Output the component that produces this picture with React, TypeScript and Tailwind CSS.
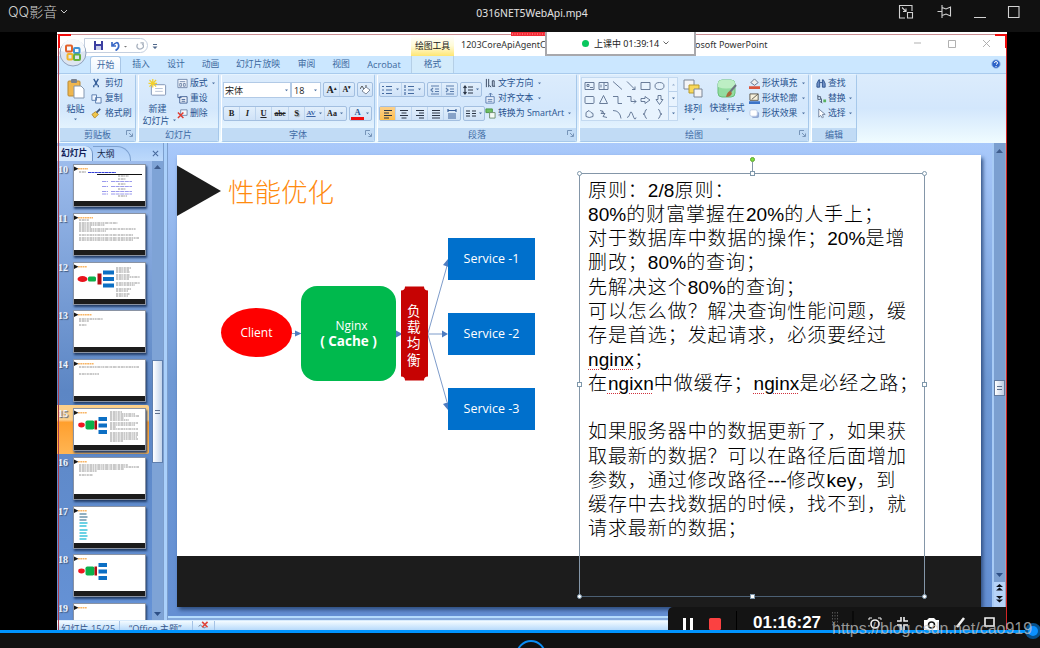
import { Fragment, type ReactNode } from "react";
import clsx from "clsx";

const UI = "font-['Open_Sans','Noto_Sans_CJK_SC',sans-serif]";

const TABS = [
  { label: "插入", w: "w-[36px]" },
  { label: "设计", w: "w-[34px]" },
  { label: "动画", w: "w-[35px]" },
  { label: "幻灯片放映", w: "w-[60px]" },
  { label: "审阅", w: "w-[37px]" },
  { label: "视图", w: "w-[32px]" },
  { label: "Acrobat", w: "w-[54px]" },
];

const NOTES = [
  "原则：2/8原则：",
  "80%的财富掌握在20%的人手上；",
  "对于数据库中数据的操作；20%是增",
  "删改；80%的查询；",
  "先解决这个80%的查询；",
  "可以怎么做？解决查询性能问题，缓",
  "存是首选；发起请求，必须要经过",
  "nginx；",
  "在ngixn中做缓存；nginx是必经之路；",
  "",
  "如果服务器中的数据更新了，如果获",
  "取最新的数据？可以在路径后面增加",
  "参数，通过修改路径---修改key，到",
  "缓存中去找数据的时候，找不到，就",
  "请求最新的数据；",
];

type ThumbKind = "table" | "text" | "diagram" | "short" | "two" | "current" | "para" | "links" | "small" | "blank";

const SLIDES: { no: number; kind: ThumbKind }[] = [
  { no: 10, kind: "table" },
  { no: 11, kind: "text" },
  { no: 12, kind: "diagram" },
  { no: 13, kind: "short" },
  { no: 14, kind: "two" },
  { no: 15, kind: "current" },
  { no: 16, kind: "para" },
  { no: 17, kind: "links" },
  { no: 18, kind: "small" },
  { no: 19, kind: "blank" },
];

const TITLE_WIDTH: Record<ThumbKind, number> = {
  table: 10,
  text: 15,
  diagram: 9,
  short: 14,
  two: 16,
  current: 9,
  para: 9,
  links: 9,
  small: 9,
  blank: 9,
};

// x, y, width of each scribbled text line
const LINES: Partial<Record<ThumbKind, number[][]>> = {
  table: [[6, 8, 7], [45, 12, 11], [45, 15, 8], [45, 20, 8], [45, 25, 8], [45, 32, 9]],
  text: [[6, 7, 10], [6, 10, 39], [6, 12, 26], [6, 14, 12], [6, 16, 57], [6, 18, 27], [6, 22, 54], [6, 25, 60], [6, 27, 54]],
  diagram: [[43, 6, 15], [43, 8, 13], [43, 10, 14], [43, 13, 14], [43, 15, 24], [43, 17, 13], [43, 21, 24], [43, 23, 19], [43, 27, 15], [43, 29, 12], [43, 32, 14], [43, 34, 12]],
  short: [[6, 9, 24], [6, 11, 10], [6, 15, 8]],
  two: [[6, 8, 60], [6, 15, 20]],
  current: [[37, 4, 12], [37, 6, 25], [37, 8, 29], [37, 10, 14], [37, 12, 19], [37, 15, 28], [37, 17, 25], [37, 19, 6], [37, 21, 28], [37, 25, 28], [37, 27, 28], [37, 29, 27], [37, 31, 28], [37, 33, 13]],
  para: [[6, 8, 49], [6, 10, 60], [6, 12, 45], [6, 14, 18], [6, 18, 14]],
};

function Caret({ className }: { className?: string }) {
  return (
    <svg className={clsx("h-[3px] w-[5px] shrink-0", className)} viewBox="0 0 5 3">
      <path d="M1 .5h3L2.5 2.3z" fill="#4a6f9f" />
    </svg>
  );
}

function Thumb({ kind }: { kind: ThumbKind }) {
  const wide = kind === "diagram";
  const compact = kind === "current" || kind === "small";
  return (
    <svg viewBox="0 0 73 43" className="h-[43px] w-[73px] shrink-0 shadow-[1px_2px_2px_#24406b]">
      <rect x=".5" y=".5" width="72" height="42" fill="#fff" stroke="#8a93a3" />
      <rect x="1" y="37" width="71" height="5" fill="#1c1c1c" />
      <path d="M1 2.5l4.5 2.3L1 7z" fill="#1a1a1a" />
      <path d={`M5 4.8h${TITLE_WIDTH[kind]}`} stroke="#f8b565" strokeWidth="1.6" strokeDasharray="1.8 .5" />
      {(LINES[kind] ?? []).map(([x, y, w], i) => (
        <path key={i} d={`M${x} ${y}h${w}`} stroke="#888" strokeWidth=".9" strokeDasharray="2 .7 3 .5 1 .6" />
      ))}
      {kind === "table" && (
        <g>
          <path d="M15 8.5h28" stroke="#3540d8" strokeDasharray="3 .4" />
          <path d="M24 10.5h45" stroke="#111" strokeWidth="1.2" />
          {[17.5, 22.5, 27.5, 30].map((y) => (
            <path key={y} d={`M29 ${y}h6m3 0h21`} stroke="#9a9aec" strokeDasharray="4 .6" />
          ))}
        </g>
      )}
      {kind === "links" &&
        [8, 11, 14, 17, 20, 24, 27, 30, 33].map((y, i) => (
          <path key={y} d={`M6.5 ${y}h${i % 2 ? 8 : 7}`} stroke={i < 3 ? "#6d94ad" : "#3ac3dc"} strokeWidth="1.5" />
        ))}
      {wide && (
        <g>
          <ellipse cx="9.5" cy="17" rx="5" ry="3" fill="#e8131c" />
          <rect x="15" y="14.5" width="8" height="5" rx="1.5" fill="#0bb14b" />
          <rect x="24.5" y="11.5" width="4" height="11" fill="#b30d14" />
          <path d="M30 8.500h11v4H30zM30 15h11v4H30zM30 21.500h11v4H30z" fill="#0c6fc4" />
        </g>
      )}
      {compact && (
        <g>
          <ellipse cx="8.5" cy="17" rx="3.3" ry="2.4" fill="#f01820" />
          <rect x="12.5" y="12.5" width="9" height="9" rx="1.8" fill="#0bb14b" />
          <rect x="21.5" y="12.5" width="2.5" height="9" fill="#b30d14" />
          <path d="M25.500 9h8.500v4h-8.500zM25.500 15.500h8.500v4h-8.500zM25.500 22h8.500v4h-8.500z" fill="#0c6fc4" />
        </g>
      )}
    </svg>
  );
}

function Group({ label, width, launcher, children }: { label: string; width: string; launcher?: boolean; children: ReactNode }) {
  return (
    <div
      className={clsx(
        "flex h-[68px] shrink-0 flex-col overflow-hidden rounded-[2px] border border-[#a6c8ea] border-l-white border-t-[#e6f4ff]",
        width,
      )}
    >
      <div className="flex h-[53px] pt-[1px]">{children}</div>
      <div className="relative flex h-[13px] items-center justify-center bg-[#c1dbf5] text-[9px] leading-none text-[#3f6ba5]">
        {label}
        {launcher && (
          <svg viewBox="0 0 7 7" className="absolute right-[2px] top-[2px] h-[7px] w-[7px]" fill="none" stroke="#7795b9">
            <path d="M.5 5V.5H5M3 3l3 3M6.500 3.500v3h-3" />
          </svg>
        )}
      </div>
    </div>
  );
}

function Item({ icon, label, caret, gap = "gap-[3px]" }: { icon: ReactNode; label: string; caret?: boolean; gap?: string }) {
  return (
    <div className={clsx("flex h-[15px] items-center whitespace-nowrap text-[8.900px] leading-none", gap)}>
      <svg viewBox="0 0 12 12" className="h-[11px] w-[11px] shrink-0" fill="none">
        {icon}
      </svg>
      <span>{label}</span>
      {caret && <Caret className="ml-[1px]" />}
    </div>
  );
}

function Tool({ children, width = "w-[16px]", active }: { children: ReactNode; width?: string; active?: boolean }) {
  return (
    <div
      className={clsx(
        "flex h-full items-center justify-center border-r border-[#bdd4ee] last:border-r-0",
        width,
        active && "bg-gradient-to-b from-[#fbd08a] to-[#ffbe4a]",
      )}
    >
      {children}
    </div>
  );
}

function ToolBox({ children }: { children: ReactNode }) {
  return (
    <div className="flex h-[15px] shrink-0 rounded-[2px] border border-[#a3bfe0] bg-gradient-to-b from-[#e2effc] to-[#cfe2f7]">
      {children}
    </div>
  );
}

function Bars({ d, color = "#2a3444" }: { d: string; color?: string }) {
  return (
    <svg viewBox="0 0 10 10" className="h-[10px] w-[10px]" fill="none" stroke={color} strokeWidth="1.2">
      <path d={d} />
    </svg>
  );
}

const SHAPES = [
  "M1 2h9v7H1zM3 4h2v2H3zM6 7h3",
  "M1 2h9v7H1zM6 2v7M3 4v3M7 5h2",
  "M1 1l9 8",
  "M1 1l8 8M9 6v3H6",
  "M1 2h9v7H1z",
  "M1 5.5a4.500 3.500 0 1 0 9 0a4.500 3.500 0 1 0-9 0",
  "M2 2h7q1 0 1 1v5q0 1-1 1H2q-1 0-1-1V3q0-1 1-1",
  "M5.500 1l4 8h-8z",
  "M1 2h5v7h4",
  "M1 2h4v5h5M8 5l2 2-2 2",
  "M1 4h4V2l5 3.500L5 9V7H1z",
  "M4 1h3v4h2L5.500 10 2 5h2z",
  "M2 8V4l3-2 2 2 2 1v3q-4 2-7 0z",
  "M2 2l3 1-2 2 4 0-2 3 4 1M4 2l2 3",
  "M1 2q7 0 8 8",
  "M1 9q2 0 3-4t3 2 3 2",
  "M7 1Q5 1 5 3.500T3 5.500Q5 5.500 5 7.500T7 10",
  "M4 1q2 0 2 2.500T8 5.500Q6 5.500 6 7.500T4 10",
];

function PlayerBar() {
  return (
    <div className="flex h-8 shrink-0 bg-[#111] text-[#d0d0d0]">
      <div className="flex w-[300px] items-start gap-[3px] pl-2 pt-[4px] font-['Inter','Noto_Sans_CJK_SC',sans-serif] text-[14px] font-light leading-[16px]">
        <span>QQ影音</span>
        <svg viewBox="0 0 8 6" className="mt-[5px] h-[6px] w-[8px]" fill="none" stroke="#c8c8c8">
          <path d="M1 1l3 3 3-3" />
        </svg>
      </div>
      <div className="flex-1 pt-[5px] text-center font-['Noto_Sans',sans-serif] text-[10.400px] leading-[16px] text-[#e3e3e3]">
        0316NET5WebApi.mp4
      </div>
      <svg viewBox="0 0 276 32" className="h-8 w-[276px]" fill="none" stroke="#d2d2d2" strokeWidth="1.1">
        <path d="M141 18h-5.500V5.500H148V11M143.500 12.500h5v5.500h-5zM138 7.500l4 4M142 8.500v3h-3" />
        <path d="M173.500 11.500h4M178 5v13M178 7.500l4 1.500 4.500-2v9l-4.500-2-4 1.500" />
        <path d="M210 17.500h12M244.500 6.500H255v11h-10.500z" />
      </svg>
    </div>
  );
}

function TitleRow() {
  return (
    <div className="flex h-[22px] shrink-0 border-t border-[#c98d92] bg-white text-[9px] leading-none text-[#333]">
      <div className="ml-[27px] mt-[3px] flex h-[15px] w-[64px] items-center gap-[8px] rounded-r-full border border-[#c4cfdf] pl-[9px]">
        <svg viewBox="0 0 9 9" className="h-[9px] w-[9px]">
          <path d="M0 0h9v9H0z" fill="#3b3ea0" />
          <path d="M2 0h5v3H2z" fill="#fff" />
          <path d="M2 5h5v4H2z" fill="#c9cdea" />
        </svg>
        <svg viewBox="0 0 17 10" className="h-[10px] w-[17px]" fill="none">
          <path d="M1 1v4h4M1.500 4.500q5-5 6-1t-3 6" stroke="#3968c6" strokeWidth="1.7" />
          <path d="M13 5h3l-1.500 1.500z" fill="#777" />
        </svg>
        <svg viewBox="0 0 9 9" className="h-[8px] w-[8px]" fill="none" stroke="#a9b2bf" strokeWidth="1.5">
          <path d="M2 2q-2 3 0 5t5 0 0-5M5 1h3v3" />
        </svg>
      </div>
      <svg viewBox="0 0 6 6" className="ml-[4px] mt-[9px] h-[6px] w-[6px]">
        <path d="M1 0h4v1H1zM.5 2.500h5L3 5z" fill="#51698c" />
      </svg>
      <div className="ml-[253px] flex w-[43px] items-center justify-center bg-gradient-to-b from-white via-[#fffbd8] to-[#ffe670] pt-[2px] text-[8.800px] text-[#222]">
        绘图工具
      </div>
      <span className="ml-[7px] mt-[5px] w-[87px] whitespace-nowrap font-['Noto_Sans',sans-serif] text-[9px]">
        1203CoreApiAgentC
      </span>
      <span className="ml-[147px] mt-[5px] whitespace-nowrap font-['Noto_Sans',sans-serif] text-[9px]">osoft PowerPoint</span>
      <svg viewBox="0 0 80 12" className="ml-auto mr-[13px] mt-[3px] h-[12px] w-[80px]" fill="none" stroke="#a8a8a8" strokeWidth=".9">
        <path d="M0 5h7M34.500 2.500h7v7h-7zM69 2l7 7M76 2l-7 7" />
      </svg>
    </div>
  );
}

function RibbonTabs() {
  return (
    <div className="flex h-[17px] shrink-0 items-stretch bg-[#cbe7ff] text-[8.800px] leading-none text-[#3b679e]">
      <div className="ml-[33px] flex w-[31px] items-center justify-center rounded-t-[3px] border border-b-0 border-[#a8c6e6] bg-gradient-to-b from-white to-[#e8f4ff]">
        开始
      </div>
      <div className="ml-[2px] flex items-center">
        {TABS.map((t, i) => (
          <span key={t.label} className={clsx("text-center", t.w, i === 6 && "text-[9.200px]")}>
            {t.label}
          </span>
        ))}
      </div>
      <div className="flex w-[43px] items-center justify-center border-x border-[#b5cfe6] bg-[#d3ebfb]">格式</div>
      <svg viewBox="0 0 10 10" className="ml-auto mr-[6px] mt-[3px] h-[10px] w-[10px]">
        <circle cx="5" cy="5" r="4.3" fill="#2c63c8" stroke="#a9c7ee" />
        <path d="M3.500 4q0-1.500 1.500-1.500T6.500 4Q6.500 5 5 5.500M5 7v1" stroke="#fff" fill="none" />
      </svg>
    </div>
  );
}

function Ribbon() {
  return (
    <div className="flex h-[70px] shrink-0 gap-[2px] border-t border-[#a9cbed] bg-gradient-to-b from-[#dcecfc] via-[#d3e7fc] to-[#f0fcff] pl-[2px] text-[#28538f]">
      <Group label="剪贴板" width="w-[77px]" launcher>
        <div className="flex w-[31px] flex-col items-center pt-[3px] text-[9px] leading-none">
          <svg viewBox="0 0 18 20" className="h-[20px] w-[18px]">
            <rect x="1" y="2" width="12" height="15" rx="1" fill="#efb64d" stroke="#b98935" />
            <rect x="4" y="0" width="6" height="4" rx="1" fill="#7b828d" />
            <path d="M7 7h7l3 3v9H7z" fill="#fff" stroke="#8497b0" />
          </svg>
          <span className="mt-[5px]">粘贴</span>
          <Caret className="mt-[5px]" />
        </div>
        <div className="flex flex-col">
          <Item label="剪切" icon={<path d="M3 1l4 7M8 1L4 8M3 8v2M8 8v2" stroke="#345d98" strokeWidth="1.5" />} />
          <Item label="复制" icon={<path d="M1 2h5v6H1zM5 5h6v6H5z" fill="#eef5ff" stroke="#5879ac" />} />
          <Item
            label="格式刷"
            icon={
              <>
                <path d="M1 7l4-3 3 3-4 4z" fill="#f0c64a" stroke="#b48a2c" />
                <path d="M6 5l4-4" stroke="#42577a" strokeWidth="2" />
              </>
            }
          />
        </div>
      </Group>

      <Group label="幻灯片" width="w-[81px]">
        <div className="flex w-[37px] flex-col items-center pt-[3px] text-[9px] leading-none">
          <svg viewBox="0 0 20 20" className="h-[19px] w-[20px]">
            <rect x="3" y="6" width="15" height="11" rx="1" fill="#fff" stroke="#8195b5" />
            <path d="M7 10h8M7 13h8" stroke="#b6c2d5" />
            <path d="M1 1l7 7M8 1L1 8M4.500 0v9M0 4.500h9" stroke="#f2d02e" strokeWidth="1.3" />
          </svg>
          <span className="mt-[6px]">新建</span>
          <span className="mt-[3px] flex items-center gap-[2px] whitespace-nowrap pl-[4px]">
            幻灯片
            <Caret />
          </span>
        </div>
        <div className="flex flex-col pl-[1px]">
          <Item label="版式" gap="gap-[2px]" caret icon={<path d="M1 1.500h10v9H1zM3 4h6M3 6h2v3H3zM7 6h2v3H7z" fill="#f3f7fd" stroke="#7187a8" />} />
          <Item label="重设" gap="gap-[2px]" icon={<path d="M3 4h8v7H3zM1 1v4h4M5 7h4M5 9h4" fill="#f3f7fd" stroke="#3d5d92" />} />
          <Item
            label="删除"
            gap="gap-[2px]"
            icon={
              <>
                <path d="M4 2h7v6H4z" fill="#f3f7fd" stroke="#7187a8" />
                <path d="M1 5l6 6M7 5l-6 6" stroke="#df3a2e" strokeWidth="1.6" />
              </>
            }
          />
        </div>
      </Group>

      <Group label="字体" width="w-[154px]" launcher>
        <div className="flex flex-col pl-[1px]">
          <div className="mt-[6px] flex h-[16px] gap-[2px] text-[9px] leading-none text-[#222]">
            <div className="flex w-[68px] items-center justify-between border border-[#b2cae6] bg-white pl-[1px] pr-[1px]">
              宋体
              <Caret />
            </div>
            <div className="-ml-[2px] flex w-[30px] items-center justify-between border border-[#b2cae6] bg-white px-[2px]">
              18
              <Caret />
            </div>
            <ToolBox>
              <Tool>
                <span className="font-['Liberation_Serif',serif] text-[10px] font-bold">A<sup className="text-[5px]">▴</sup></span>
              </Tool>
              <Tool width="w-[14px]">
                <span className="font-['Liberation_Serif',serif] text-[8px] font-bold">A<sup className="text-[5px]">▾</sup></span>
              </Tool>
            </ToolBox>
            <ToolBox>
              <Tool width="w-[14px]">
                <svg viewBox="0 0 11 10" className="h-[10px] w-[11px]">
                  <path d="M2 6l4-4 4 3-4 4z" fill="#fff" stroke="#7f8a9c" />
                  <path d="M0 4l2-3 2 3M5 1h2" stroke="#555" fill="none" />
                </svg>
              </Tool>
            </ToolBox>
          </div>
          <div className="mt-[8px] flex h-[15px] gap-[2px] font-['Liberation_Serif',serif] text-[8.500px] font-bold leading-none text-[#222]">
            <ToolBox>
              <Tool>B</Tool>
              <Tool><i>I</i></Tool>
              <Tool><u>U</u></Tool>
              <Tool width="w-[17px]"><s className="text-[7.500px]">abc</s></Tool>
              <Tool><span className="[text-shadow:1px_1px_1px_#888]">S</span></Tool>
              <Tool width="w-[20px]">
                <span className="text-[7px] text-[#3c66a7] underline">AV</span>
                <Caret className="ml-[2px]" />
              </Tool>
              <Tool width="w-[21px]">
                <span className="text-[8px]">Aa</span>
                <Caret className="ml-[2px]" />
              </Tool>
            </ToolBox>
            <ToolBox>
              <Tool width="w-[21px]">
                <span className="border-b-[3px] border-[#f20d0d] px-[3px] leading-[9px] text-[#2d5790]">A</span>
                <Caret className="ml-[1px]" />
              </Tool>
            </ToolBox>
          </div>
        </div>
      </Group>

      <Group label="段落" width="w-[200px]" launcher>
        <div className="flex w-[107px] flex-col pl-[1px]">
          <div className="mt-[6px] flex h-[16px] gap-[2px]">
            <ToolBox>
              <Tool width="w-[22px]">
                <Bars d="M0 1.500h2M4 1.500h6M0 5h2M4 5h6M0 8.500h2M4 8.500h6" color="#456a9f" />
                <Caret className="ml-[3px]" />
              </Tool>
              <Tool width="w-[22px]">
                <Bars d="M1 0v3M4 1.500h6M1 4v2M4 5h6M1 7v3M4 8.500h6" color="#456a9f" />
                <Caret className="ml-[3px]" />
              </Tool>
            </ToolBox>
            <ToolBox>
              <Tool width="w-[14px]"><Bars d="M1 1h8M5 4h4M5 6.500h4M1 9h8M3 3L1 5l2 2" color="#5a7cab" /></Tool>
              <Tool width="w-[15px]"><Bars d="M1 1h8M5 4h4M5 6.500h4M1 9h8M1 3l2 2-2 2" color="#5a7cab" /></Tool>
            </ToolBox>
            <ToolBox>
              <Tool width="w-[20px]">
                <Bars d="M5 2h5M5 5h5M5 8h5M2 1v8M.5 3L2 1l1.500 2M.5 7L2 9l1.500-2" />
                <Caret className="ml-[2px]" />
              </Tool>
            </ToolBox>
          </div>
          <div className="mt-[8px] flex h-[15px] gap-[2px]">
            <ToolBox>
              <Tool active><Bars d="M1 1.500h8M1 4h5M1 6.500h8M1 9h5" /></Tool>
              <Tool><Bars d="M1 1.500h8M2.500 4h5M1 6.500h8M2.500 9h5" /></Tool>
              <Tool><Bars d="M1 1.500h8M4 4h5M1 6.500h8M4 9h5" /></Tool>
              <Tool><Bars d="M1 1.500h8M1 4h8M1 6.500h8M1 9h8" /></Tool>
              <Tool><Bars d="M1 5h8M1 7h8M1 9h8M1 0v3M9 0v3M1 1.500h8" color="#385e98" /></Tool>
            </ToolBox>
            <ToolBox>
              <Tool width="w-[20px]">
                <Bars d="M0 2h4M0 4.500h4M0 7h4M6 2h4M6 4.500h4M6 7h4" />
                <Caret className="ml-[2px]" />
              </Tool>
            </ToolBox>
          </div>
        </div>
        <div className="flex flex-col">
          <Item label="文字方向" caret gap="gap-[2px]" icon={<path d="M1.500 1v9M4 1v9M8 9V3h2v6M5 8l1.500 2M8 9h3" stroke="#33435c" />} />
          <Item label="对齐文本" caret gap="gap-[2px]" icon={<path d="M1 4h9v7H1zM3 7h5M3 9h5M6 0v4M4 2l2-2 2 2" fill="#eef5ff" stroke="#5879ac" />} />
          <Item
            label="转换为 SmartArt"
            caret
            gap="gap-[2px]"
            icon={
              <>
                <path d="M1 1h7v4H1z" fill="#6fbf62" stroke="#479342" />
                <path d="M5 5h6v6H5z" fill="#f5fbf5" stroke="#6c8d70" />
              </>
            }
          />
        </div>
      </Group>

      <Group label="绘图" width="w-[230px]" launcher>
        <div className="ml-[1px] mt-[1px] flex h-[44px] border border-[#c3d9f0] bg-[#e8f3fe]">
          <div className="grid grid-cols-6 content-start pl-[2px]">
            {SHAPES.map((d, i) => (
              <svg key={i} viewBox="0 0 11 11" className="mr-[3px] mt-[2px] h-[12px] w-[11px]" fill="none" stroke="#5b6f8e" strokeWidth=".9">
                <path d={d} />
              </svg>
            ))}
          </div>
          <div className="flex w-[9px] flex-col divide-y divide-[#b9d0ea] border-l border-[#b9d0ea]">
            {[0, 1, 2].map((i) => (
              <div key={i} className="flex flex-1 items-center justify-center">
                <Caret className={i === 0 ? "rotate-180 opacity-50" : ""} />
              </div>
            ))}
          </div>
        </div>
        <div className="ml-[3px] flex w-[24px] flex-col items-center pt-[3px] text-[9px] leading-none">
          <svg viewBox="0 0 20 20" className="h-[20px] w-[20px]">
            <path d="M1 1h10v9H1z" fill="#f4f4f6" stroke="#7b8596" />
            <path d="M6 6h10v8H6z" fill="#f8d85a" stroke="#b89b2f" />
            <path d="M11 10h8v8h-8z" fill="#f4f4f6" stroke="#7b8596" />
          </svg>
          <span className="mt-[5px] whitespace-nowrap">排列</span>
          <Caret className="mt-[5px]" />
        </div>
        <div className="flex w-[44px] flex-col items-center pt-[3px] text-[8.800px] leading-none">
          <svg viewBox="0 0 20 20" className="h-[20px] w-[20px]">
            <rect x="1" y="1" width="17" height="17" rx="4" fill="#93dca0" stroke="#68bf79" />
            <path d="M1 5q0-4 4-4h9q4 0 4 4v3q-9 3-17 0z" fill="#bdeec4" />
            <path d="M19 6l-6 7" stroke="#6c7480" strokeWidth="2" />
            <path d="M13 12q-3 1-4 6 5 0 6-4z" fill="#a9683a" />
          </svg>
          <span className="mt-[5px] whitespace-nowrap">快速样式</span>
          <Caret className="mt-[5px]" />
        </div>
        <div className="flex flex-col">
          <Item
            label="形状填充"
            caret
            gap="gap-[2px]"
            icon={
              <>
                <path d="M2 5l4-4 4 4-4 3z" fill="#eee" stroke="#5f6d86" />
                <path d="M0 9h12v3H0z" fill="#d9543c" />
              </>
            }
          />
          <Item
            label="形状轮廓"
            caret
            gap="gap-[2px]"
            icon={
              <>
                <path d="M1 1h9v7H1zM3 7l7-6" fill="#f6f0dc" stroke="#5c564a" />
                <path d="M0 9h12v3H0z" fill="#3a73c8" />
              </>
            }
          />
          <Item
            label="形状效果"
            caret
            gap="gap-[2px]"
            icon={
              <>
                <rect x="3" y="4" width="8" height="7" rx="2" fill="#93abd6" />
                <rect x="1" y="2" width="8" height="7" rx="2" fill="#fff" stroke="#b9c8e2" />
              </>
            }
          />
        </div>
      </Group>

      <Group label="编辑" width="w-[46px]">
        <div className="flex flex-col pl-[4px]">
          <Item label="查找" gap="gap-[1px]" icon={<path d="M1 10V6l2-4h1v8zM7 10V2h1l2 4v4zM4 5h3" fill="#6e8fc4" stroke="#31558f" />} />
          <Item
            label="替换"
            caret
            gap="gap-[1px]"
            icon={
              <>
                <path d="M2 2v5h3V4H2M6 6v4M4 9l3 2" stroke="#4a5a74" />
                <path d="M8 7h3v3H8z" fill="#58b05c" />
              </>
            }
          />
          <Item label="选择" caret gap="gap-[1px]" icon={<path d="M3 1v9l2-2 2 3 1-1-1-3h3z" fill="#fff" stroke="#70819d" />} />
        </div>
      </Group>
    </div>
  );
}

function SlideList() {
  return (
    <div className="flex w-[106px] shrink-0 flex-col overflow-hidden">
      <div className="flex h-[18px] shrink-0 items-end bg-gradient-to-b from-[#a9ccf8] to-[#bcd9fb] text-[8.800px] leading-[13px] text-[#15284c]">
        <div className="flex h-[15px] w-[36px] items-center whitespace-nowrap rounded-tr-[8px] border-r border-[#6f94c6] bg-[#d5e8fd] pl-[4px] font-bold text-[#101c58]">
          幻灯片
        </div>
        <div className="flex h-[15px] w-[38px] items-center rounded-tr-[14px] border-r border-t border-[#7da1d0] pl-[4px]">大纲</div>
        <svg viewBox="0 0 8 8" className="mb-[4px] ml-[21px] h-[7px] w-[7px]" stroke="#47699c" strokeWidth="1.2">
          <path d="M1 1l6 6M7 1L1 7" />
        </svg>
      </div>
      <div className="flex min-h-0 flex-1 bg-gradient-to-b from-[#9dbcec] via-[#5c86c4] to-[#6592d6]">
        <div className="flex w-[95px] flex-col overflow-hidden">
          {SLIDES.map((s) => (
            <div
              key={s.no}
              className={clsx(
                "flex h-[48.800px] shrink-0 pl-[1px] pt-[3px]",
                s.no === 15 && "mr-[3px] rounded-r-[2px] bg-gradient-to-b from-[#fcd08a] from-30% via-[#ff9f2c] via-35% to-[#ffb552]",
              )}
            >
              <span className="w-[15px] shrink-0 font-['Liberation_Serif',serif] text-[10px] font-bold leading-[12px] text-[#eef4fd] [text-shadow:1px_1px_1px_#41597e]">
                {s.no}
              </span>
              <Thumb kind={s.kind} />
            </div>
          ))}
        </div>
        <div className="flex w-[11px] flex-col items-center bg-[#7ea3d6]">
          <svg viewBox="0 0 7 4" className="mt-[4px] h-[4px] w-[7px]">
            <path d="M0 4l3.500-4L7 4z" fill="#3e5c8c" />
          </svg>
          <div className="mt-[191px] flex h-[103px] w-full items-center justify-center border border-[#5f7fae] bg-gradient-to-r from-white to-[#c3d4ec]">
            <span className="h-[4px] w-[5px] border-y border-[#5d6f8c]" />
          </div>
          <svg viewBox="0 0 7 4" className="mb-[4px] mt-auto h-[4px] w-[7px]">
            <path d="M0 0l3.500 4L7 0z" fill="#2d4f86" />
          </svg>
        </div>
      </div>
    </div>
  );
}

// splits a line so that latin words keep their own tracking
function NoteLine({ text }: { text: string }) {
  const parts = text.split(/([\x20-\x7e]+)/).filter(Boolean);
  return (
    <div className="h-[24.150px] whitespace-nowrap">
      {parts.map((p, i) => {
        if (!/^[\x20-\x7e]+$/.test(p)) return <Fragment key={i}>{p}</Fragment>;
        const misspelt = p === "nginx" || p === "ngixn";
        return (
          <span
            key={i}
            className={clsx(
              "tracking-[0.100px]",
              misspelt && "underline decoration-[#d0303c] decoration-dotted decoration-1 underline-offset-[3px]",
            )}
          >
            {p}
          </span>
        );
      })}
    </div>
  );
}

function Handle({ pos, round }: { pos: string; round?: boolean }) {
  return <span className={clsx("absolute h-[5px] w-[5px] border border-[#7f98ab] bg-white", round && "rounded-full", pos)} />;
}

const SERVICES = [
  { label: "Service -1", top: "top-[83px]" },
  { label: "Service -2", top: "top-[158px]" },
  { label: "Service -3", top: "top-[233px]" },
];

function Slide() {
  return (
    <div className="relative ml-[9px] mt-[12px] h-[452px] w-[804px] shrink-0 bg-white shadow-[2px_3px_4px_#2f4e80]">
      <div className="absolute inset-x-0 bottom-0 h-[51px] bg-[#1c1c1c]" />
      <svg viewBox="0 0 400 300" className="absolute left-0 top-0 h-[300px] w-[400px]">
        <path d="M0 10.500L44 36 0 61z" fill="#1c1c1c" />
        <g stroke="#6e90c4" strokeWidth=".9">
          <path d="M115 178.500h5M219 179h4M251 179h14M251 178l19-67M251 180l19 67" />
        </g>
        <path
          d="M118 175.500l6.500 3-6.500 3zM219 175.500l6.500 3.500-6.500 3.500zM265 175.500l6 3.500-6 3.500zM271 104l-5 6 5.500 2zM271 255l-5-6 5.500-2z"
          fill="#4d7cc0"
        />
        <path d="M228 131.500h19q0 4 4 4v86q-4 0-4 4h-19q0-4-4-4v-86q4 0 4-4z" fill="#c60303" />
      </svg>
      <h1 className="absolute left-[51px] top-[16px] whitespace-nowrap font-['Noto_Sans_CJK_SC',sans-serif] text-[26.500px] font-light leading-[40px] text-[#ff8a0e]">
        性能优化
      </h1>
      <div className="absolute left-[44px] top-[153px] flex h-[49px] w-[71px] items-center justify-center rounded-[50%] bg-[#fe0000] font-['Open_Sans',sans-serif] text-[12px] text-white">
        Client
      </div>
      <div className="absolute left-[124px] top-[131px] flex h-[95px] w-[95px] flex-col items-center justify-center rounded-[16px] bg-[#00b94d] font-['Open_Sans',sans-serif] text-[12px] leading-[15.500px] text-white">
        <span className="ml-[6px]">Nginx</span>
        <span className="whitespace-pre text-[13.500px] font-bold">( Cache )</span>
      </div>
      <div className="absolute left-[230px] top-[147px] w-[14px] break-all font-['Noto_Sans_CJK_SC',sans-serif] text-[13.500px] leading-[16.200px] text-white">
        负载均衡
      </div>
      {SERVICES.map((s) => (
        <div
          key={s.label}
          className={clsx(
            "absolute left-[271px] flex h-[42px] w-[87px] items-center justify-center bg-[#0070cc] font-['Open_Sans',sans-serif] text-[12.500px] text-white",
            s.top,
          )}
        >
          {s.label}
        </div>
      ))}

      <div className="absolute left-[402px] top-[18px] h-[424px] w-[346px] border border-[#8496a8] border-b-[#4c6074] pl-[8px] pt-[5px] font-['Liberation_Sans','Noto_Sans_CJK_SC',sans-serif] text-[19px] font-light leading-[24px] tracking-[0.930px] text-black">
        {NOTES.map((line, i) => (
          <NoteLine key={i} text={line} />
        ))}
        <span className="absolute left-[172px] top-[-12px] h-[12px] w-px bg-[#8496a8]" />
        <span className="absolute left-[170px] top-[-17px] h-[5px] w-[5px] rounded-full border border-[#5ea135] bg-[#7be03c]" />
        <Handle pos="-left-[3px] -top-[3px]" round />
        <Handle pos="left-[170px] -top-[3px]" />
        <Handle pos="-right-[3px] -top-[3px]" round />
        <Handle pos="-left-[3px] top-[208px]" />
        <Handle pos="-right-[3px] top-[208px]" />
        <Handle pos="-bottom-[3px] -left-[3px]" round />
        <Handle pos="-bottom-[3px] left-[170px]" />
        <Handle pos="-bottom-[3px] -right-[3px]" round />
      </div>
    </div>
  );
}

function Workspace() {
  return (
    <div className="flex min-h-0 flex-1">
      <SlideList />
      <div className="w-[5px] border-x border-[#7d9fcd] bg-[#aad0fb]" />
      <div className="flex min-w-0 flex-1 flex-col">
        <div className="flex h-[473px] shrink-0 overflow-hidden bg-gradient-to-b from-[#a9c9fb] via-[#6f99d4] via-50% to-[#648fd3]">
          <Slide />
          <div className="ml-auto flex w-[13px] shrink-0 flex-col items-center border-l-2 border-[#a8cbf5] bg-[#7b9fd0]">
            <svg viewBox="0 0 7 4" className="mt-[6px] h-[4px] w-[7px] shrink-0">
              <path d="M0 4l3.500-4L7 4z" fill="#3e5c8c" />
            </svg>
            <div className="mt-[227px] flex h-[16px] w-full shrink-0 items-center justify-center border border-[#627a9e] bg-gradient-to-r from-white to-[#bccbe2]">
              <span className="h-[4px] w-[5px] border-y border-[#5d6f8c]" />
            </div>
            <svg viewBox="0 0 7 4" className="mt-[177px] h-[4px] w-[7px] shrink-0">
              <path d="M0 0l3.500 4L7 0z" fill="#2d4f86" />
            </svg>
            <svg viewBox="0 0 11 26" className="mt-[5px] h-[26px] w-[11px] shrink-0">
              <path d="M0 0h11v26H0z" fill="#b6d3f9" />
              <path d="M5.500 2L9 5H2zM5.500 5.500L9 8.500H2zM2 14h7l-3.500 3zM2 17.500h7L5.500 20.500z" fill="#0b0f18" />
            </svg>
          </div>
        </div>
        <div className="h-[2px] bg-[#b5dcfd]" />
        <div className="flex-1 bg-[#83a9dc]" />
      </div>
      <div className="w-[2px] bg-[#9aa9c0]" />
    </div>
  );
}

function StatusBar() {
  return (
    <div className="flex h-[10px] shrink-0 overflow-hidden border-t border-[#d8ebfc] bg-gradient-to-b from-[#f4fbff] to-[#b7dafb] text-[9.200px] leading-[15px] text-[#33568a]">
      <span className="w-[63px] whitespace-nowrap border-r border-[#a5c3e6] pl-[4px]">幻灯片 15/25</span>
      <span className="w-[73px] whitespace-nowrap border-r border-[#a5c3e6] pl-[9px]">“Office 主题”</span>
      <span className="w-[22px] border-r border-[#a5c3e6] pl-[4px]">
        <svg viewBox="0 0 13 10" className="h-[9px] w-[13px]" fill="none">
          <path d="M1 6q2-3 4 0t4 1" stroke="#6b7b93" />
          <path d="M5 1l6 6M11 1L5 7" stroke="#e0443a" strokeWidth="1.8" />
        </svg>
      </span>
    </div>
  );
}

function OfficeButton() {
  return (
    <svg viewBox="0 0 28 28" className="absolute left-[2px] top-[7px] h-[28px] w-[28px]">
      <circle cx="14" cy="14" r="13" fill="#dde5f1" stroke="#8fa2bd" />
      <path d="M2 12a12 12 0 0 1 24 0q-12 4-24 0z" fill="#f7f9fc" />
      <g fill="none" strokeWidth="2">
        <rect x="7" y="6.5" width="6" height="6" rx="1" stroke="#e2622b" />
        <rect x="15" y="9" width="5.5" height="5" rx="1" stroke="#3f93d6" />
        <rect x="8.5" y="15" width="5" height="5.5" rx="1" stroke="#f2b52a" />
        <rect x="15" y="15.5" width="6" height="5.5" rx="1" stroke="#65b13d" />
      </g>
    </svg>
  );
}

function RecorderBar() {
  return (
    <div className="absolute bottom-0 left-[611px] flex h-[23px] w-[338px] overflow-hidden rounded-tl-[5px] bg-[#141414]">
      <svg viewBox="0 0 85 23" className="h-[23px] w-[85px] shrink-0">
        <path d="M15 11h3v12h-3zM22 11h3v12h-3z" fill="#fff" />
        <rect x="41" y="11" width="12" height="12" rx="1.5" fill="#fb4141" />
        <path d="M68.500 4v19" stroke="#000" />
      </svg>
      <span className="w-[69px] shrink-0 whitespace-nowrap pt-[6px] font-['Liberation_Sans',sans-serif] text-[17px] font-bold leading-[19px] text-white">
        01:16:27
      </span>
      <svg viewBox="0 0 184 23" className="h-[23px] w-[184px] shrink-0" fill="none">
        <path d="M10.500 5v15M13 5v15M15.500 5v15" stroke="#555" strokeDasharray="1.5 1.5" />
        <path d="M31 4v19" stroke="#000" />
        <g stroke="#f2f2f2" strokeWidth="1.6">
          <circle cx="53" cy="17" r="4" />
          <path d="M47 13v-2h3M56 11h3v2" strokeWidth="1" />
          <path d="M75 14h4v-4M86 14h-4v-4M75 18h4v5M86 18h-4v5" />
          <path d="M135 20l7-9" strokeWidth="2.5" />
          <path d="M163 11h9v8h-9z" />
        </g>
        <path d="M102 13h3l2-2h5l2 2h3v10h-15z" fill="#fff" />
        <circle cx="109.5" cy="18" r="3" fill="#fff" stroke="#141414" strokeWidth="1.5" />
      </svg>
    </div>
  );
}

function PowerPoint() {
  return (
    <div className={clsx("relative flex h-[598px] w-[950px] flex-col overflow-hidden bg-white", UI)}>
      <div className="h-[3px] shrink-0 bg-white" />
      <div className="-mt-px flex min-h-0 flex-1 flex-col">
        <TitleRow />
        <RibbonTabs />
        <Ribbon />
        <Workspace />
        <StatusBar />
      </div>
      <span className="absolute left-[1px] top-[16px] h-[582px] w-px bg-[#a83b4c]" />
      <OfficeButton />
      <span className="absolute left-px top-[2px] h-[14px] w-[13px] border-l-2 border-t-2 border-[#f00b0b]" />
      <span className="absolute right-0 top-[2px] h-[14px] w-[12px] border-r-2 border-t-2 border-[#f00b0b]" />
      <span className="absolute right-0 top-[16px] h-[582px] w-px bg-[#d32626]" />
      <svg viewBox="0 0 36 4" className="absolute left-[454px] top-0 h-[4px] w-[36px]">
        <path d="M0 0h36v4H0z" fill="#f22b35" />
        <path d="M1 2h35" stroke="#ff9aa0" strokeDasharray="1 1.5" />
      </svg>
      <div className="absolute left-[488px] top-0 flex h-[24px] w-[151px] items-center border-2 border-t-0 border-[#a8a8ac] bg-white pl-[35px] font-['Noto_Sans','Noto_Sans_CJK_SC',sans-serif] text-[9px] leading-none text-[#222]">
        <span className="mr-[5px] h-[7px] w-[7px] rounded-full bg-[#08c75e]" />
        上课中 01:39:14
        <svg viewBox="0 0 6 4" className="ml-[4px] h-[4px] w-[6px]" fill="none" stroke="#666">
          <path d="M.5.500L3 3 5.500.500" />
        </svg>
      </div>
      <RecorderBar />
    </div>
  );
}

export default function App() {
  return (
    <div className="relative flex h-[648px] w-[1040px] flex-col overflow-hidden bg-black">
      <PlayerBar />
      <div className="flex h-[598px] shrink-0 pl-[57px]">
        <PowerPoint />
      </div>
      <div className="h-[3px] shrink-0 bg-[#0094ff]" />
      <div className="flex-1 bg-[#111]" />
      <span className="absolute left-[516px] top-[640px] h-[30px] w-[30px] rounded-full border-2 border-[#0a8cf4]" />
      <span className="absolute left-[1025px] top-[623px] flex h-[16px] w-[16px] items-center justify-center rounded-full bg-[#07508c]">
        <span className="h-[10px] w-[10px] rounded-full bg-[#0b90ff]" />
      </span>
      <span className="absolute left-[832px] top-[619px] whitespace-nowrap font-['Liberation_Sans',sans-serif] text-[16px] leading-[20px] text-[#c4c4c4]/75">
        https://blog.csdn.net/cao919
      </span>
    </div>
  );
}
